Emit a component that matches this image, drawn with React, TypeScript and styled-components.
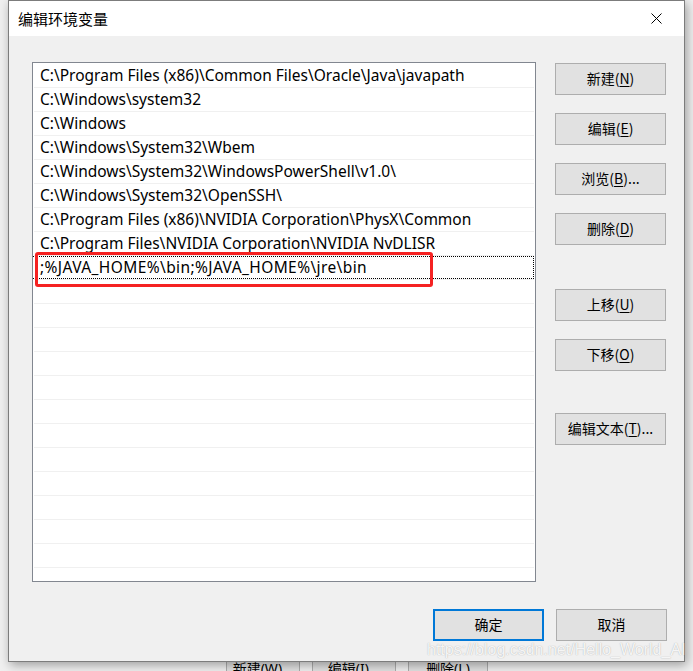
import React from "react";
import styled, { createGlobalStyle } from "styled-components";

const GlobalStyle = createGlobalStyle`
  html, body { margin: 0; padding: 0; }
  body {
    background: #f0f0f0;
    font-family: "Noto Sans", "Noto Sans CJK SC", sans-serif;
    overflow: hidden;
  }
`;

const Stage = styled.div`
  position: relative;
  width: 693px;
  height: 671px;
  overflow: hidden;
  background: #f0f0f0;
`;

const Backdrop = styled.div`
  display: flex;
  flex-direction: column;
  justify-content: flex-end;
  height: 100%;
  background: #f0f0f0;
`;

const BackButtons = styled.div`
  display: flex;
  gap: 12px;
  padding: 0 0 0 226px;
  height: 12px;
  overflow: hidden;
`;

const BackButton = styled.div<{ $w: number }>`
  width: ${(p) => p.$w}px;
  height: 24px;
  box-sizing: border-box;
  border: 1px solid #adadad;
  background: #e1e1e1;
  font-size: 14px;
  line-height: 18px;
  text-align: center;
  color: #000;
  font-family: "Noto Sans", "Noto Sans CJK SC", sans-serif;
`;

const Dialog = styled.div`
  position: absolute;
  left: 8px;
  top: 0;
  width: 677px;
  height: 662px;
  box-sizing: border-box;
  border: 1px solid #7c7c7c;
  background: #f0f0f0;
  display: flex;
  flex-direction: column;
  box-shadow: 2px 3px 10px rgba(0, 0, 0, 0.35);
`;

const TitleBar = styled.div`
  height: 35px;
  background: #fff;
  display: flex;
  align-items: center;
  justify-content: space-between;
  padding: 0 0 0 9px;
  flex-shrink: 0;
`;

const Title = styled.div`
  font-family: "Noto Sans CJK SC", sans-serif;
  font-size: 15px;
  color: #000;
`;

const CloseBox = styled.div`
  width: 46px;
  height: 35px;
  display: flex;
  align-items: center;
  justify-content: center;
  margin-right: 5px;
`;

const Body = styled.div`
  flex: 1;
  display: flex;
  flex-direction: column;
  padding: 26px 17px 20px 23px;
`;

const Main = styled.div`
  display: flex;
  gap: 19px;
`;

const ListBox = styled.div`
  position: relative;
  width: 504px;
  height: 520px;
  box-sizing: border-box;
  border: 1px solid #828790;
  background: #fff;
  padding: 1px 1px 0;
  overflow: hidden;
`;

const Row = styled.div<{ $focus?: boolean }>`
  height: 24px;
  box-sizing: border-box;
  border-bottom: 1px solid #f0f0f0;
  padding-left: 6px;
  font-size: 15.5px;
  line-height: 23px;
  color: #000;
  white-space: nowrap;
  position: relative;
  ${(p) =>
    p.$focus
      ? `
    letter-spacing: 0.4px;
    &::after {
      content: "";
      position: absolute;
      left: -2px; right: 0; top: 0; bottom: 0;
      border: 1px dotted #000;
    }
  `
      : ""}
`;

const Annotation = styled.div`
  position: absolute;
  left: 2px;
  top: 189px;
  width: 398px;
  height: 35px;
  box-sizing: border-box;
  border: 3px solid #f52222;
  border-radius: 3px;
  pointer-events: none;
`;

const Side = styled.div`
  display: flex;
  flex-direction: column;
  padding-top: 1px;
`;

const Btn = styled.div<{ $mt?: number; $default?: boolean }>`
  width: 111px;
  height: 32px;
  margin-top: ${(p) => p.$mt ?? 0}px;
  box-sizing: border-box;
  border: ${(p) => (p.$default ? "2px solid #0078d7" : "1px solid #adadad")};
  background: #e1e1e1;
  display: flex;
  align-items: center;
  justify-content: center;
  padding-bottom: 2px;
  font-family: "Noto Sans CJK SC", sans-serif;
  font-size: 14px;
  color: #000;
  white-space: nowrap;
  u {
    text-decoration: underline;
    text-underline-offset: 2px;
  }
`;

const Footer = styled.div`
  display: flex;
  justify-content: flex-end;
  gap: 12px;
  margin-top: 27px;
`;

const Watermark = styled.div`
  position: absolute;
  left: 427px;
  top: 641px;
  font-family: "Liberation Sans", sans-serif;
  font-size: 16px;
  color: rgba(255, 255, 255, 0.9);
  text-shadow: 0 0 1px rgba(90, 90, 90, 0.5);
  white-space: nowrap;
  pointer-events: none;
`;

const paths = [
  "C:\\Program Files (x86)\\Common Files\\Oracle\\Java\\javapath",
  "C:\\Windows\\system32",
  "C:\\Windows",
  "C:\\Windows\\System32\\Wbem",
  "C:\\Windows\\System32\\WindowsPowerShell\\v1.0\\",
  "C:\\Windows\\System32\\OpenSSH\\",
  "C:\\Program Files (x86)\\NVIDIA Corporation\\PhysX\\Common",
  "C:\\Program Files\\NVIDIA Corporation\\NVIDIA NvDLISR",
  ";%JAVA_HOME%\\bin;%JAVA_HOME%\\jre\\bin",
];

const rows = [...paths, ...Array(13).fill("")];

const sideButtons: { label: string; key: string; tail?: string; mt: number }[] = [
  { label: "新建", key: "N", mt: 0 },
  { label: "编辑", key: "E", mt: 18 },
  { label: "浏览", key: "B", tail: "...", mt: 18 },
  { label: "删除", key: "D", mt: 18 },
  { label: "上移", key: "U", mt: 44 },
  { label: "下移", key: "O", mt: 18 },
  { label: "编辑文本", key: "T", tail: "...", mt: 42 },
];

export default function App() {
  return (
    <>
      <GlobalStyle />
      <Stage>
        <Backdrop>
          <BackButtons>
            <BackButton $w={74}>新建(W)...</BackButton>
            <BackButton $w={84}>编辑(I)...</BackButton>
            <BackButton $w={80}>删除(L)</BackButton>
          </BackButtons>
        </Backdrop>
        <Dialog>
          <TitleBar>
            <Title>编辑环境变量</Title>
            <CloseBox>
              <svg width="11" height="11" viewBox="0 0 11 11">
                <path d="M0.5 0.5 L10.5 10.5 M10.5 0.5 L0.5 10.5" stroke="#000" strokeWidth="1" />
              </svg>
            </CloseBox>
          </TitleBar>
          <Body>
            <Main>
              <ListBox>
                {rows.map((r, i) => (
                  <Row key={i} $focus={i === 8}>
                    {r}
                  </Row>
                ))}
                <Annotation />
              </ListBox>
              <Side>
                {sideButtons.map((b) => (
                  <Btn key={b.label} $mt={b.mt}>
                    {b.label}(<u>{b.key}</u>){b.tail ?? ""}
                  </Btn>
                ))}
              </Side>
            </Main>
            <Footer>
              <Btn $default>确定</Btn>
              <Btn>取消</Btn>
            </Footer>
          </Body>
        </Dialog>
        <Watermark>https://blog.csdn.net/Hello_World_AI</Watermark>
      </Stage>
    </>
  );
}
